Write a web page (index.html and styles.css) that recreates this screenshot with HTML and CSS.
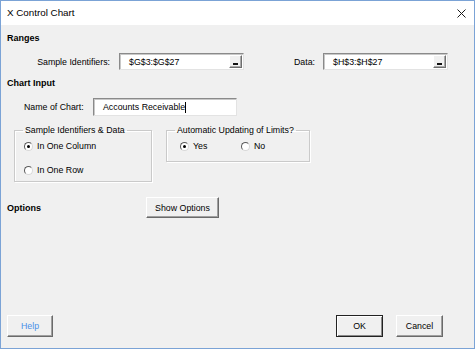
FILE: index.html
```html
<!DOCTYPE html>
<html>
<head>
<meta charset="utf-8">
<title>X Control Chart</title>
<link rel="stylesheet" href="styles.css">
</head>
<body>
<div class="window">
  <div class="titlebar">
    <span class="title">X Control Chart</span>
    <svg class="close" width="9" height="9" viewBox="0 0 9 9"><path d="M0.5 0.5 L8.5 8.5 M8.5 0.5 L0.5 8.5" stroke="#1a1a1a" stroke-width="1" fill="none"/></svg>
  </div>
  <div class="content">
    <div class="heading h-ranges">Ranges</div>
    <div class="row row-ranges">
      <span class="label lbl-sample">Sample Identifiers:</span>
      <div class="refbox ref-sample"><span class="reftext">$G$3:$G$27</span><span class="dropbtn"><span class="bar"></span></span></div>
      <span class="label lbl-data">Data:</span>
      <div class="refbox ref-data"><span class="reftext">$H$3:$H$27</span><span class="dropbtn"><span class="bar"></span></span></div>
    </div>
    <div class="heading h-chart">Chart Input</div>
    <div class="row row-name">
      <span class="label lbl-name">Name of Chart:</span>
      <div class="textbox"><span class="reftext">Accounts Receivable</span><span class="caret"></span></div>
    </div>
    <div class="groups">
      <fieldset class="group g1">
        <legend>Sample Identifiers &amp; Data</legend>
        <div class="group-body">
          <div class="opt opt-first"><span class="radio on"></span>In One Column</div>
          <div class="opt opt-second"><span class="radio"></span>In One Row</div>
        </div>
      </fieldset>
      <fieldset class="group g2">
        <legend>Automatic Updating of Limits?</legend>
        <div class="group-body opts-h">
          <div class="opt opt-first opt-yes"><span class="radio on"></span>Yes</div>
          <div class="opt opt-first"><span class="radio"></span>No</div>
        </div>
      </fieldset>
    </div>
    <div class="row row-options">
      <span class="heading lbl-options">Options</span>
      <button class="btn btn-show">Show Options</button>
    </div>
  </div>
  <div class="footer">
    <button class="btn btn-help">Help</button>
    <div class="spacer"></div>
    <button class="btn btn-ok">OK</button>
    <button class="btn btn-cancel">Cancel</button>
  </div>
</div>
</body>
</html>
```

FILE: styles.css
```css
* { box-sizing: border-box; }
html, body { margin: 0; padding: 0; background: #f0f0f0; }
body {
  font-family: "Liberation Sans", Arial, sans-serif;
  font-size: 8.8px;
  color: #000;
}
.window {
  width: 475px;
  height: 349px;
  border: 1px solid #7ba3d6;
  background: #f0f0f0;
  display: flex;
  flex-direction: column;
}
.titlebar {
  height: 24px;
  flex: none;
  background: #fff;
  display: flex;
  align-items: center;
  justify-content: space-between;
  padding-left: 6px;
  padding-right: 8px;
}
.title { font-size: 9.8px; line-height: 12px; }
.close { display: block; }
.content { padding-left: 6px; flex: none; }
.heading { font-weight: bold; line-height: 12px; font-size: 9px; }
.h-ranges { margin-top: 7px; }
.h-chart { margin-top: 7px; }
.row { display: flex; align-items: center; }
.label { line-height: 12px; white-space: nowrap; }
.row-ranges { margin-top: 9px; height: 17px; }
.lbl-sample { margin-left: 30px; width: 73px; text-align: right; }
.lbl-data { margin-left: 48px; width: 23px; text-align: right; }
.refbox, .textbox {
  height: 17px;
  background: #fff;
  border: 1px solid;
  border-color: #8a8a8a #e3e3e3 #e3e3e3 #8a8a8a;
  box-shadow: inset 1px 1px 0 #c8c8c8;
  display: flex;
  align-items: center;
}
.ref-sample { margin-left: 9px; width: 125px; }
.ref-data { margin-left: 8px; width: 125px; }
.reftext { padding-left: 9px; line-height: 12px; white-space: nowrap; }
.dropbtn {
  margin-left: auto;
  margin-right: 1px;
  width: 13px;
  height: 13px;
  background: #f0f0f0;
  border: 1px solid;
  border-color: #fff #6e6e6e #6e6e6e #fff;
  box-shadow: inset -1px -1px 0 #a9a9a9;
  display: flex;
  align-items: flex-end;
  justify-content: center;
  padding-bottom: 2px;
}
.bar { width: 5px; height: 2px; background: #111; }
.row-name { margin-top: 9px; height: 18px; }
.lbl-name { margin-left: 17px; width: 61px; }
.textbox { margin-left: 8px; width: 144px; height: 18px; }
.caret { width: 1px; height: 11px; background: #000; margin-left: 0; }
.groups { display: flex; align-items: flex-start; margin-top: 8px; margin-left: 7px; }
.group {
  margin: 0;
  padding: 0;
  border: 1px solid #cacaca;
  box-shadow: 1px 1px 0 #fff, inset 1px 1px 0 #fff;
  min-width: 0;
}
.group legend {
  line-height: 12px;
  padding: 0 2px;
  margin-left: 8px;
  white-space: nowrap;
}
.g1 { width: 138px; }
.g1 .group-body { padding: 0 0 5px 9px; }
.g2 { width: 144px; margin-left: 14px; }
.g2 .group-body { padding: 0 0 9px 13px; }
.opt { display: flex; align-items: center; height: 12px; line-height: 12px; white-space: nowrap; }
.opt-first { margin-top: 4px; }
.opt-second { margin-top: 12px; }
.opts-h { display: flex; }
.opt-yes { width: 61px; }
.radio {
  width: 9px;
  height: 9px;
  border-radius: 50%;
  border: 1px solid;
  border-color: #5a5a5a #d8d8d8 #d8d8d8 #5a5a5a;
  background: #fff;
  margin-right: 4px;
  display: flex;
  align-items: center;
  justify-content: center;
  flex: none;
}
.radio.on::after {
  content: "";
  width: 3px;
  height: 3px;
  border-radius: 50%;
  background: #000;
}
.row-options { margin-top: 15px; height: 21px; }
.lbl-options { width: 139px; }
.btn {
  font-family: "Liberation Sans", Arial, sans-serif;
  font-size: 8.8px;
  color: #000;
  background: #f0f0f0;
  border: 1px solid;
  border-color: #fff #6a6a6a #6a6a6a #fff;
  box-shadow: inset -1px -1px 0 #a0a0a0;
  padding: 0;
  margin: 0;
  display: flex;
  align-items: center;
  justify-content: center;
  line-height: 12px;
}
.btn-show { width: 73px; height: 21px; }
.footer {
  margin-top: auto;
  display: flex;
  padding: 0 31px 11px 6px;
}
.footer .btn { height: 22px; width: 47px; }
.footer .btn-help { width: 46px; color: #4a8fe8; }
.spacer { flex: 1; }
.btn-ok {
  border: 1px solid #222;
  box-shadow: inset 1px 1px 0 #fff, inset -1px -1px 0 #8a8a8a;
}
.btn-cancel { margin-left: 13px; }
```
